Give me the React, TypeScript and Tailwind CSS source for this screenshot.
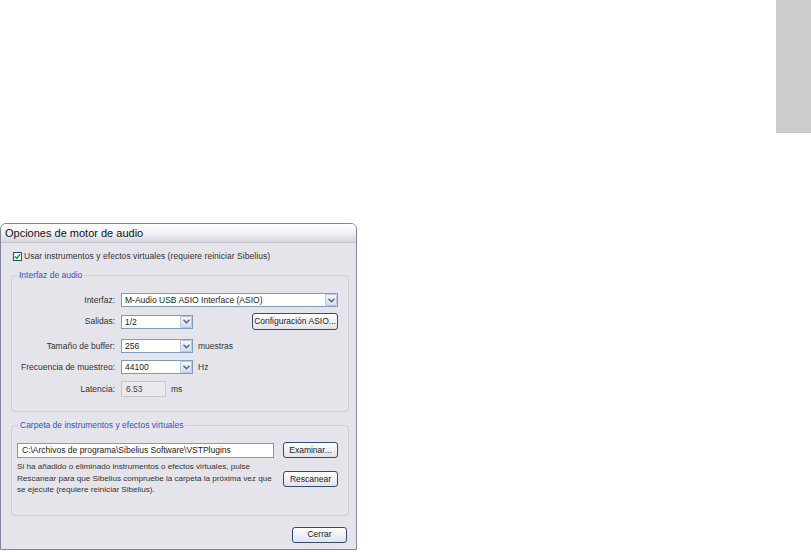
import React from "react";

function Chevron() {
  return (
    <svg width="7" height="5" viewBox="0 0 7 5">
      <path d="M0.5 0.8 L3.5 3.8 L6.5 0.8" fill="none" stroke="#4d6185" strokeWidth="1.4" />
    </svg>
  );
}

function Select({ value, width }: { value: string; width: string }) {
  return (
    <div className={`${width} h-[14px] bg-white border border-[#7f9db9] flex items-center justify-between shrink-0`}>
      <span className="pl-[3px] text-[8.5px] leading-[10px] text-[#222]">{value}</span>
      <div className="w-[12px] h-[12px] border border-[#b9c6e4] rounded-[1px] bg-gradient-to-b from-[#f4f6fc] to-[#d6ddf0] flex items-center justify-center">
        <Chevron />
      </div>
    </div>
  );
}

function Btn({ label, w, h = "h-[16px]" }: { label: string; w: string; h?: string }) {
  return (
    <div className={`${w} ${h} border border-[#2c4e7e] rounded-[3px] bg-gradient-to-b from-[#ffffff] to-[#e2e2ea] flex items-center justify-center text-[8.5px] text-[#222] shrink-0 whitespace-nowrap`}>
      {label}
    </div>
  );
}

function Label({ text }: { text: string }) {
  return <div className="w-[109px] pr-[6px] text-right text-[8.5px] text-[#333] shrink-0 whitespace-nowrap">{text}</div>;
}

export default function App() {
  return (
    <div className="w-[811px] h-[552px] bg-white flex justify-between overflow-hidden font-['Liberation_Sans',Arial,sans-serif]">
      <div className="pt-[223px]">
        <div className="w-[357px] h-[327px] border border-[#83839c] rounded-t-[6px] bg-[#e4e4ea] flex flex-col">
          {/* title bar */}
          <div className="h-[19px] rounded-t-[5px] bg-gradient-to-b from-[#ffffff] via-[#f2f2f6] to-[#d5d5df] border-b border-[#c4c4cf] flex items-center pl-[4px]">
            <span className="text-[11px] text-[#111]">Opciones de motor de audio</span>
          </div>

          <div className="pl-[10px] pr-[7px] flex flex-col">
            {/* checkbox */}
            <div className="mt-[8px] h-[10px] flex items-center pl-[2px]">
              <div className="w-[9px] h-[9px] bg-white border border-[#1c5180] flex items-center justify-center">
                <svg width="7" height="7" viewBox="0 0 7 7">
                  <path d="M0.8 3.4 L2.7 5.3 L6.2 1.2" fill="none" stroke="#21a121" strokeWidth="1.5" />
                </svg>
              </div>
              <span className="ml-[2px] text-[8.5px] tracking-[0.05px] text-[#333] whitespace-nowrap">
                Usar instrumentos y efectos virtuales (requiere reiniciar Sibelius)
              </span>
            </div>

            {/* group 1 */}
            <fieldset className="mt-[9px] border border-[#cfcfd6] rounded-[4px] pb-[14px] px-0">
              <legend className="ml-[5px] px-[2px] text-[8.5px] leading-[10px] text-[#2b55d0]">Interfaz de audio</legend>
              <div className="mt-[13px] h-[14px] flex items-center">
                <Label text="Interfaz:" />
                <Select value="M-Audio USB ASIO Interface (ASIO)" width="w-[217px]" />
              </div>
              <div className="mt-[6px] h-[17px] flex items-center">
                <Label text="Salidas:" />
                <Select value="1/2" width="w-[72px]" />
                <div className="ml-[59px]">
                  <Btn label="Configuración ASIO..." w="w-[86px]" h="h-[17px]" />
                </div>
              </div>
              <div className="mt-[9px] h-[14px] flex items-center">
                <Label text="Tamaño de buffer:" />
                <Select value="256" width="w-[72px]" />
                <span className="ml-[5px] text-[8.5px] text-[#333]">muestras</span>
              </div>
              <div className="mt-[7px] h-[14px] flex items-center">
                <Label text="Frecuencia de muestreo:" />
                <Select value="44100" width="w-[72px]" />
                <span className="ml-[5px] text-[8.5px] text-[#333]">Hz</span>
              </div>
              <div className="mt-[7px] h-[16px] flex items-center">
                <Label text="Latencia:" />
                <div className="w-[45px] h-[16px] border border-[#c6c6cf] bg-[#e9e9ee] flex items-center pl-[4px] text-[8.5px] text-[#444]">
                  6.53
                </div>
                <span className="ml-[5px] text-[8.5px] text-[#333]">ms</span>
              </div>
            </fieldset>

            {/* group 2 */}
            <fieldset className="mt-[8px] border border-[#cfcfd6] rounded-[4px] pl-[5px] pr-0 pb-[19px]">
              <legend className="ml-[1px] px-[2px] text-[8.5px] leading-[10px] text-[#2b55d0]">
                Carpeta de instrumentos y efectos virtuales
              </legend>
              <div className="mt-[12px] h-[16px] flex items-center">
                <div className="w-[257px] h-[15px] bg-white border border-[#7f9db9] flex items-center pl-[4px] text-[8.5px] text-[#222] whitespace-nowrap">
                  C:\Archivos de programa\Sibelius Software\VSTPlugins
                </div>
                <div className="ml-[9px]">
                  <Btn label="Examinar..." w="w-[55px]" />
                </div>
              </div>
              <div className="mt-[3px] flex items-start">
                <p className="w-[266px] shrink-0 text-[8.1px] leading-[11.5px] text-[#333] whitespace-nowrap">
                  Si ha añadido o eliminado instrumentos o efectos virtuales, pulse
                  <br />
                  Rescanear para que Sibelius compruebe la carpeta la próxima vez que
                  <br />
                  se ejecute (requiere reiniciar Sibelius).
                </p>
                <div className="mt-[10px]">
                  <Btn label="Rescanear" w="w-[55px]" />
                </div>
              </div>
            </fieldset>

            <div className="mt-[11px] flex justify-end pr-[2px]">
              <Btn label="Cerrar" w="w-[55px]" />
            </div>
          </div>
        </div>
      </div>

      <div className="w-[35px] h-[133px] bg-[#cccccc]" />
    </div>
  );
}
